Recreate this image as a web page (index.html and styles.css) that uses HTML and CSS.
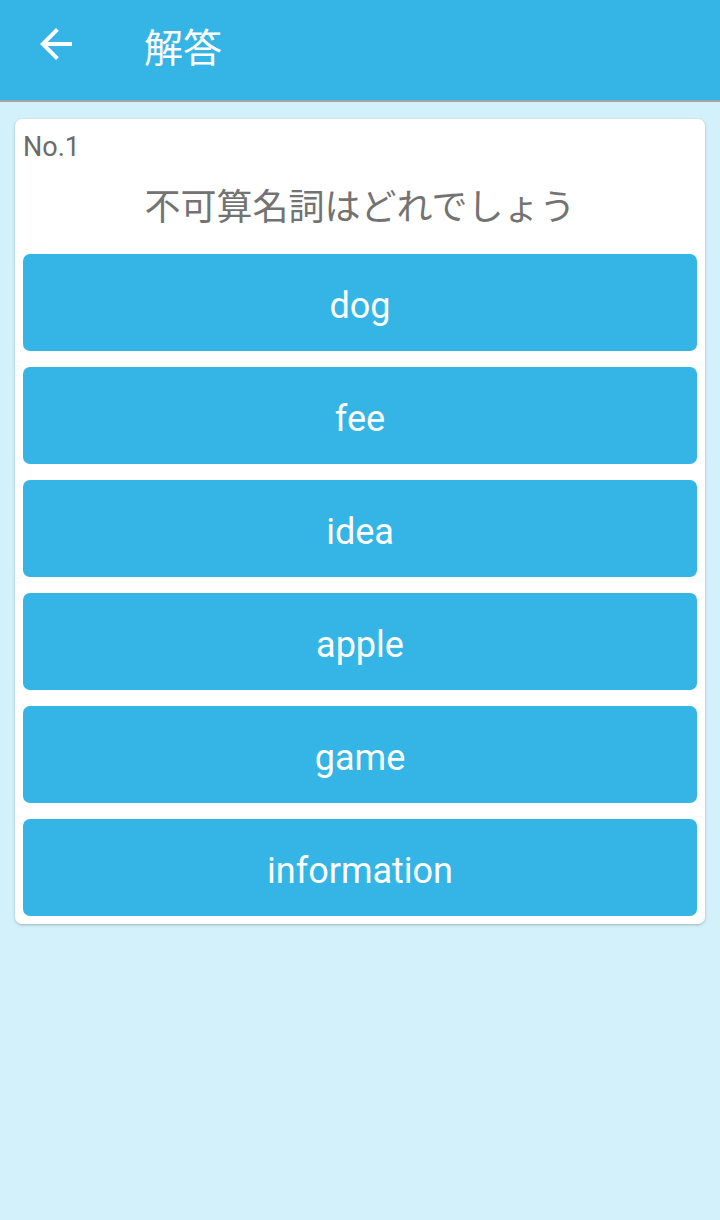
FILE: index.html
```html
<!DOCTYPE html>
<html lang="ja">
<head>
<meta charset="utf-8">
<title>解答</title>
<link rel="stylesheet" href="styles.css">
</head>
<body>
<header class="appbar">
  <span class="back">
    <svg viewBox="0 0 24 24" width="48" height="48"><path fill="#fff" d="M20 11H7.83l5.59-5.59L12 4l-8 8 8 8 1.41-1.41L7.83 13H20v-2z"/></svg>
  </span>
  <h1 class="title">解答</h1>
</header>
<main class="content">
  <section class="card">
    <div class="num">No.1</div>
    <div class="question">不可算名詞はどれでしょう</div>
    <div class="choices">
      <div class="choice">dog</div>
      <div class="choice">fee</div>
      <div class="choice">idea</div>
      <div class="choice">apple</div>
      <div class="choice">game</div>
      <div class="choice">information</div>
    </div>
  </section>
</main>
</body>
</html>
```
FILE: styles.css
```css
html, body {
  margin: 0;
  padding: 0;
}
body {
  background: #d3f1fb;
  font-family: Roboto, "Noto Sans CJK JP", sans-serif;
  width: 720px;
  height: 1220px;
}
.appbar {
  height: 100px;
  background: #35b5e5;
  border-bottom: 2px solid #a3a3a3;
  display: flex;
  align-items: center;
  box-sizing: content-box;
}
.back {
  display: flex;
  width: 48px;
  height: 48px;
  margin-left: 32px;
  margin-top: -12px;
}
.title {
  margin: 0 0 0 64px;
  font-weight: 400;
  font-size: 39px;
  color: #fff;
  line-height: 1;
  margin-top: -10px;
  font-family: "Noto Sans CJK JP", sans-serif;
}
.content {
  padding: 17px 15px 0;
}
.card {
  background: #fff;
  border-radius: 7px;
  box-shadow: 0 1px 3px rgba(0,0,0,0.25);
  padding: 8px;
}
.num {
  font-size: 27px;
  color: #6b6b6b;
  line-height: 40px;
}
.question {
  text-align: center;
  font-size: 36px;
  color: #737373;
  line-height: 50px;
  margin: 12px 0 25px;
  font-family: "Noto Sans CJK JP", sans-serif;
}
.choices {
  display: flex;
  flex-direction: column;
  gap: 16px;
}
.choice {
  height: 97px;
  box-sizing: border-box;
  padding-top: 6px;
  background: #35b5e5;
  border-radius: 7px;
  color: #fff;
  font-size: 36px;
  display: flex;
  align-items: center;
  justify-content: center;
}
```
